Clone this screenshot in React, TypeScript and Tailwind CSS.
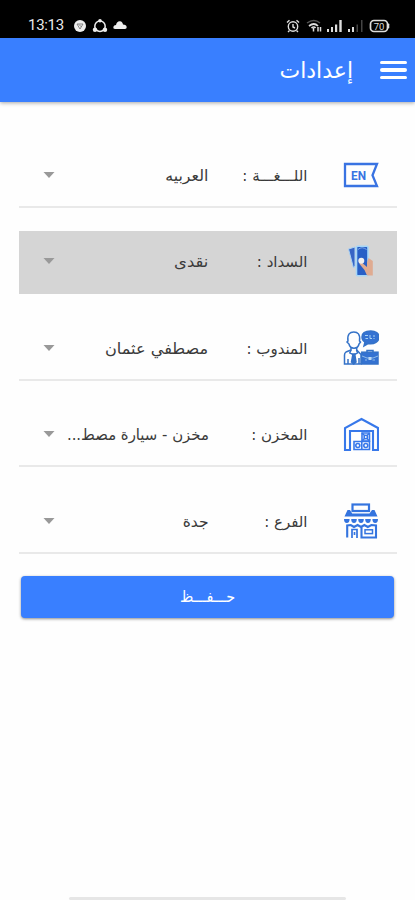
import type { ReactNode } from "react";

type Setting = {
  id: string;
  label: string;
  value: string;
  icon: ReactNode;
  valueClass?: string;
  active?: boolean;
};

const LanguageIcon = () => (
  <svg viewBox="0 0 36 36" className="h-9 w-9" fill="none" stroke="#3973e2">
    <path d="M2 7H34L29.5 18.2L34 29H2Z" strokeWidth="2.3" />
    <text
      x="15.5"
      y="22.8"
      textAnchor="middle"
      textLength="15"
      lengthAdjust="spacingAndGlyphs"
      fontFamily="Roboto, sans-serif"
      fontSize="13.5"
      fontWeight="700"
      fill="#3973e2"
      stroke="none"
    >
      EN
    </text>
  </svg>
);

const PaymentIcon = () => (
  <svg viewBox="0 0 36 36" className="h-9 w-9">
    <path d="M5.5 6L12 4V23L10.5 25Z" fill="#3865c5" stroke="#a9d2f5" strokeWidth="1" />
    <rect x="13.5" y="3.2" width="11.5" height="29.5" rx="1.2" fill="#285fc6" stroke="#a5d6f8" strokeWidth="1.6" />
    <path d="M15 6.5Q19 3 23.5 6.5" fill="none" stroke="#7ba8e9" strokeWidth="1" />
    <path d="M17 18L24 24V19.5L25.5 15L29.8 18V32.5H24L21.5 27L16.5 21Z" fill="#dfab91" />
    <circle cx="18.3" cy="17.8" r="3" fill="#f1efed" />
  </svg>
);

const AgentIcon = () => (
  <svg viewBox="0 0 36 36" className="h-9 w-9" fill="none" stroke="#3472c8" strokeWidth="1.5">
    <path d="M5 11C4 4 7 2 10.8 2S17.5 4 16.5 11L17.5 12L16 14C15 19.5 7 19.5 6 14L4 12Z" />
    <path d="M8 17.5V20L3 22Q1.5 23 1.5 25V34H18V24.5L13.7 20V17.5" />
    <path d="M8 20L6.8 23L10.8 25L14.5 23L13.5 20" />
    <path d="M10 24L8.5 32L10.7 34L13 32L11.7 24Z" fill="#3472c8" />
    <path d="M5 29V34M16 28V34" />
    <path d="M27.8 1C22.5 1 19 3.2 19 7C19 9.5 20.2 11 22 12L21 16L25 13.6C31.5 14.6 36 11.5 36 7C36 3.2 32.5 1 27.8 1Z" fill="#3472d2" />
    <path d="M22 5.5H25M22.5 8.5H25M27 5V8.5H29M31 5V7M31 8V9" stroke="#a7d3f4" strokeWidth="1" />
    <path d="M24 23V20.5H30V23" />
    <rect x="18.8" y="22.2" width="16.2" height="11.8" fill="#3472d2" />
    <path d="M19 26L24 28H30L35 26M22 30H24M29.5 30H32" stroke="#91bce8" strokeWidth="1" />
    <rect x="25.5" y="27" width="3" height="3" fill="#bcd9f3" stroke="none" />
  </svg>
);

const WarehouseIcon = () => (
  <svg viewBox="0 0 36 36" className="h-9 w-9" fill="none" stroke="#3778ea">
    <path d="M2 34V12L18.5 3L35 12V34H30V15H7V34Z" strokeWidth="2.1" />
    <g strokeWidth="1.6">
      <path d="M19 17H26.5V25H19Z" />
      <path d="M11 25.5H18.8V33.5H11ZM18.8 25.5H26.5V33.5H18.8Z" />
      <circle cx="22.8" cy="21" r="1.7" />
      <circle cx="14.8" cy="29.5" r="2" />
      <circle cx="22.8" cy="29.5" r="2" />
      <path d="M19 17L21.5 19.5M26.5 17L24 19.5M19 25L21.5 22.5M26.5 25L24 22.5" />
    </g>
  </svg>
);

const BranchIcon = () => (
  <svg viewBox="0 0 36 36" className="h-9 w-9" fill="none" stroke="#3474df">
    <rect x="9.5" y="1.5" width="16.5" height="6.5" strokeWidth="2.2" />
    <path d="M4.5 7H7L9.2 10.5H26.5L29 7H31.5L34.5 13.5H1.5Z" fill="#3474df" stroke="none" />
    <path
      d="M1 16H6.6Q6.6 20 3.8 20T1 16ZM8.2 16H13.8Q13.8 20 11 20T8.2 16ZM15.2 16H20.8Q20.8 20 18 20T15.2 16ZM22.2 16H27.8Q27.8 20 25 20T22.2 16ZM29.4 16H35Q35 20 32.2 20T29.4 16Z"
      fill="#3474df"
      stroke="none"
    />
    <path d="M4.2 34.5V22.5L7.8 22L11 24L14.6 22L18 24L21.4 22L24.8 24L28.4 22L33 22.5V34.5H18.5V24" strokeWidth="2.1" />
    <path d="M9 35V26.5H14V35M11.5 29V32" strokeWidth="1.7" />
    <rect x="22" y="26.8" width="7.5" height="3.8" strokeWidth="1.5" />
  </svg>
);

const settings: Setting[] = [
  {
    id: "language",
    label: "اللـــغـــة :",
    value: "العربيه",
    icon: <LanguageIcon />,
    valueClass: "scale-x-[1.02]",
  },
  {
    id: "payment",
    label: "السداد :",
    value: "نقدى",
    icon: <PaymentIcon />,
    valueClass: "scale-x-[1.06]",
    active: true,
  },
  {
    id: "agent",
    label: "المندوب :",
    value: "مصطفي عثمان",
    icon: <AgentIcon />,
    valueClass: "scale-x-[1.04]",
  },
  {
    id: "warehouse",
    label: "المخزن :",
    value: "مخزن - سيارة مصط...",
    icon: <WarehouseIcon />,
    valueClass: "scale-x-[0.96]",
  },
  {
    id: "branch",
    label: "الفرع :",
    value: "جدة",
    icon: <BranchIcon />,
  },
];

const StatusBar = () => (
  <div
    dir="ltr"
    className="flex h-[38px] items-end justify-between bg-black pr-[25px] pb-[5px] pl-7 text-[#e8e8e8]"
  >
    <div className="flex h-[15px] items-center">
      <span className="w-[45px] font-[Roboto] text-[15px] leading-[15px] tracking-[-0.3px]">13:13</span>
      <svg viewBox="0 0 14 14" className="h-[14px] w-[14px]">
        <circle cx="7" cy="7" r="6" fill="#eee" />
        <path d="M4 5H10L7 10ZM6 5.5L8.5 8" fill="none" stroke="#777" strokeWidth="0.9" />
      </svg>
      <svg viewBox="0 0 16 16" className="ml-[5px] h-4 w-4" fill="#eee">
        <circle cx="8" cy="8.2" r="5.2" fill="none" stroke="#eee" strokeWidth="1.5" />
        <circle cx="8" cy="2.8" r="1.8" />
        <circle cx="3" cy="11.8" r="2.2" />
        <circle cx="13" cy="11.8" r="2.2" />
      </svg>
      <svg viewBox="0 0 14 10" className="mb-[2px] ml-[5px] h-[10px] w-[14px]" fill="#eee">
        <path d="M2 9Q0 9 .3 7Q.8 5 3 5Q4 1 7 1.3Q9.5 1.5 10 4.5Q13.5 4.5 13.7 7.2Q13.7 9 12 9Z" />
      </svg>
    </div>
    <div className="flex h-[14px] items-center">
      <svg viewBox="0 0 14 14" className="h-[14px] w-[14px]" fill="none" stroke="#ddd" strokeWidth="1.4">
        <circle cx="7" cy="7.5" r="4.7" />
        <path d="M7 5V8L9 9M1 3.5L3.5 1.2M10.5 1.2L13 3.5M3.5 11.5L2 13M10.5 11.5L12 13" />
      </svg>
      <svg viewBox="0 0 16 14" className="ml-[6px] h-[14px] w-4" fill="none">
        <path d="M1 4Q8 -1 14 4" stroke="#555" strokeWidth="1.5" />
        <path d="M3 7Q8 3 12 7M5.5 9Q8 7 9.5 9" stroke="#ddd" strokeWidth="1.7" />
        <path d="M7.5 12.5V9M12 8V12.5M14.5 8V12.5" stroke="#ddd" strokeWidth="1.5" />
      </svg>
      <svg viewBox="0 0 17 14" className="ml-1 h-[14px] w-[17px]" fill="#ddd">
        <path d="M1 10H3V13H1ZM5 8H7V13H5ZM9 5.5H11.2V13H9ZM13.3 1H15.7V13H13.3Z" />
      </svg>
      <svg viewBox="0 0 17 14" className="ml-1 h-[14px] w-[17px]" fill="#444">
        <path d="M1 10H3V13H1ZM5 8H7V13H5Z" fill="#ddd" />
        <path d="M9.5 5.5H11V13H9.5ZM14 1H15.5V13H14Z" />
      </svg>
      <svg viewBox="0 0 21 14" className="ml-[5px] h-[14px] w-[21px]">
        <rect x="1.5" y="1.5" width="17" height="11" rx="3.5" fill="none" stroke="#ddd" strokeWidth="1.7" />
        <rect x="18.5" y="4.5" width="1.8" height="5" rx=".8" fill="#ddd" />
        <text x="10" y="10.6" textAnchor="middle" fontFamily="Roboto, sans-serif" fontSize="9.5" fill="#ddd">
          70
        </text>
      </svg>
    </div>
  </div>
);

const SettingRow = ({ setting }: { setting: Setting }) => (
  <button
    type="button"
    className={`flex h-[63.5px] w-full items-center border-b-2 pr-[18px] text-[#3a3a3a] ${
      setting.active ? "border-[#d5d5d5] bg-[#d5d5d5]" : "border-[#e9e9e9]"
    }`}
  >
    {setting.icon}
    <span className="mr-[35px] flex w-[99px] shrink-0 pt-0.5 text-[15px] leading-6 whitespace-nowrap">
      {setting.label}
    </span>
    <span className="flex w-[140px] shrink-0 pt-0.5 text-[15.5px] leading-6 whitespace-nowrap">
      <span className={`origin-right ${setting.valueClass ?? ""}`}>{setting.value}</span>
    </span>
    <svg viewBox="0 0 12 6" className="mr-[14px] h-[6px] w-3 fill-[#999]">
      <path d="M0.5 0H11.5L6 6Z" />
    </svg>
  </button>
);

export default function App() {
  return (
    <div
      dir="rtl"
      className="flex h-[900px] w-[415px] flex-col overflow-hidden bg-[#fefefe] font-['DejaVu_Sans',sans-serif]"
    >
      <StatusBar />

      <header className="flex h-16 shrink-0 items-center bg-[#397fff] pr-2 text-white shadow-[0_1px_4px_rgba(0,0,0,0.35)]">
        <button type="button" className="flex w-[27px] flex-col gap-[4px]">
          <span className="h-[3.5px] rounded-full bg-white" />
          <span className="h-[3.5px] rounded-full bg-white" />
          <span className="h-[3.5px] rounded-full bg-white" />
        </button>
        <h1 className="mr-[27px] pt-0.5 text-[22px] leading-8">إعدادات</h1>
      </header>

      <main className="flex flex-col px-[18.5px] pt-[42px]">
        <div className="flex flex-col gap-[23px]">
          {settings.map((setting) => (
            <SettingRow key={setting.id} setting={setting} />
          ))}
        </div>
        <button
          type="button"
          className="mx-[2.5px] mt-[22.5px] flex h-[42px] items-center justify-center rounded-[4px] bg-[#397fff] text-[16px] text-white shadow-[0_1px_3px_rgba(0,0,0,0.45)]"
        >
          <span className="scale-x-90">حـــفـــظ</span>
        </button>
      </main>

      <div className="mt-auto mr-[69px] h-[3px] w-[277px] shrink-0 rounded-full bg-[#e6e6e6]" />
    </div>
  );
}
